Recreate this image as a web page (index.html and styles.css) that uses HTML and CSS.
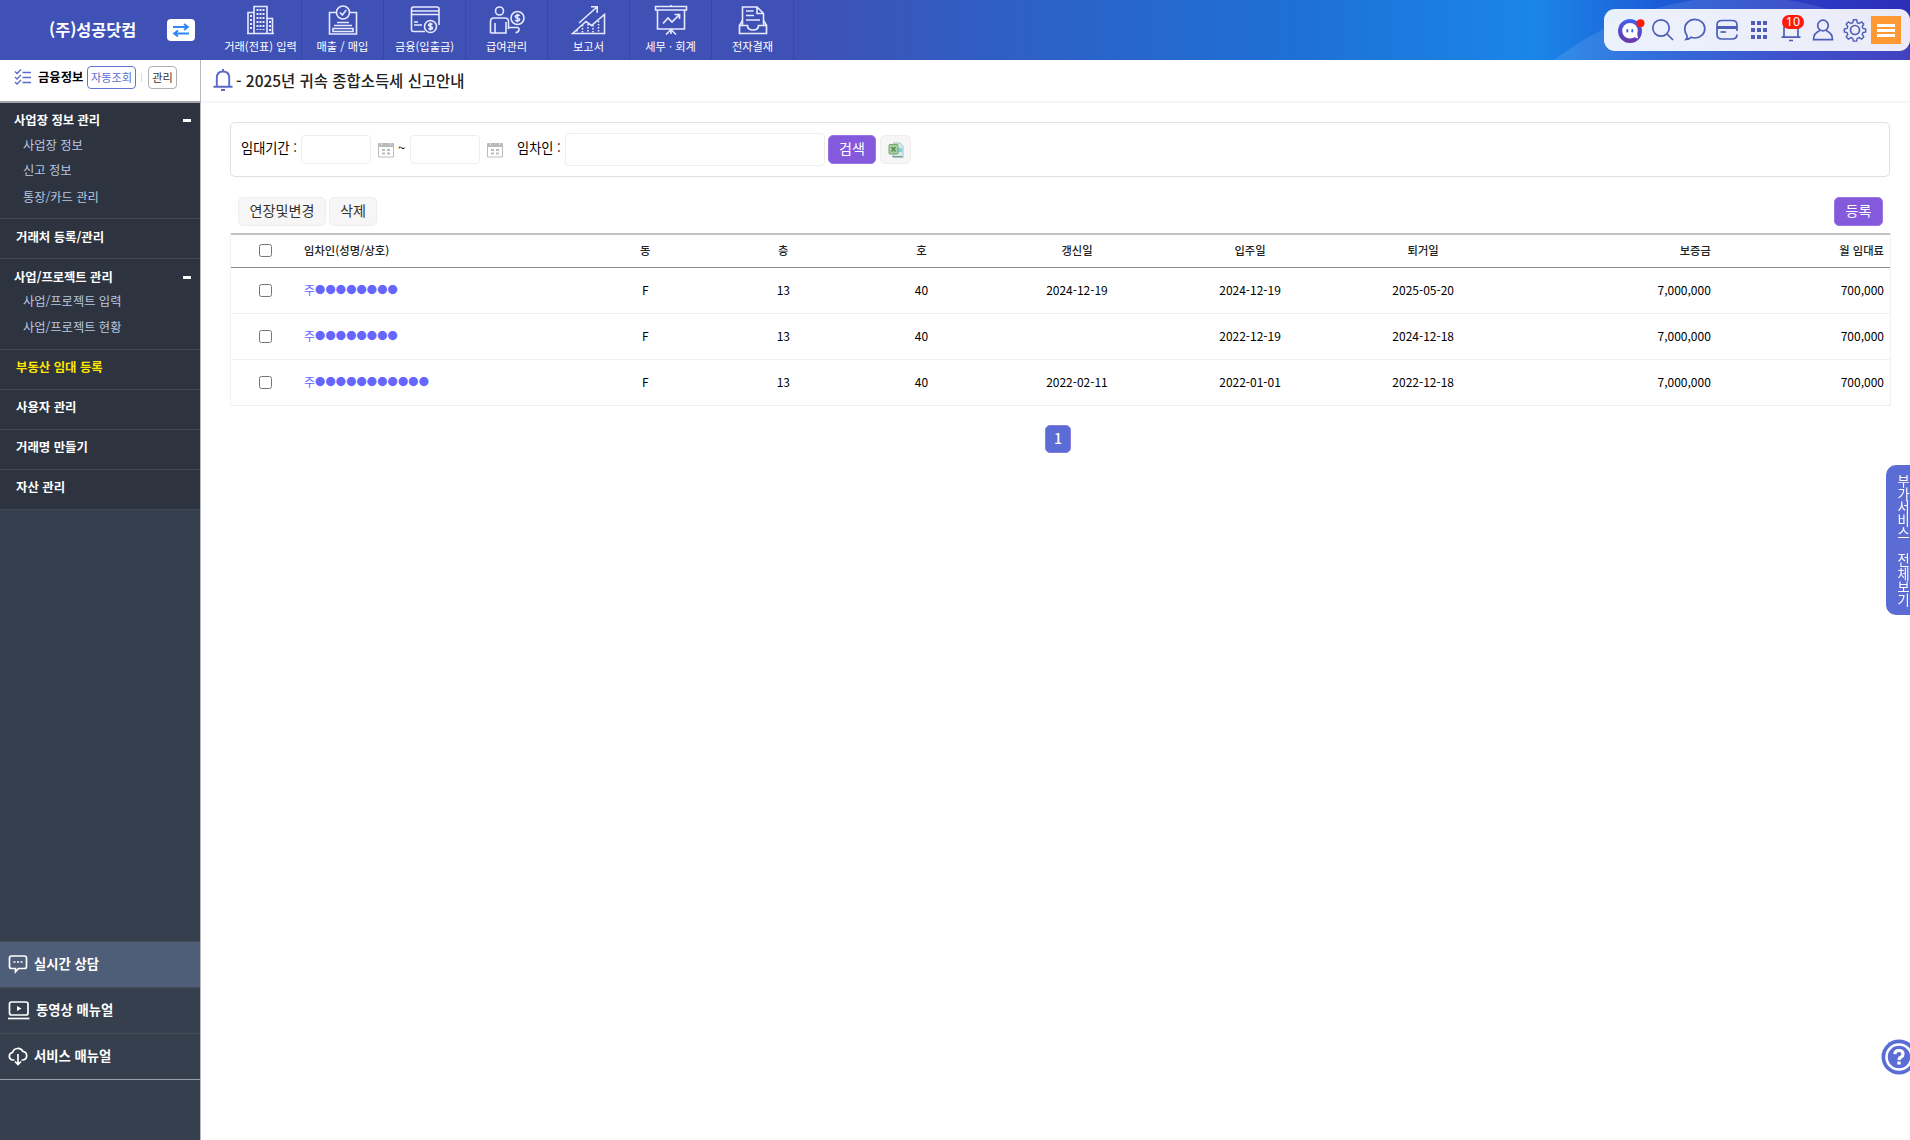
FILE: index.html
```html
<!DOCTYPE html>
<html lang="ko">
<head>
  <meta charset="utf-8">
  <title>부동산 임대 등록</title>
  <link rel="stylesheet" href="styles.css">
</head>
<body>

  <!-- 상단 헤더 -->
  <header class="header">
    <div class="company">
      <span class="company-name">(주)성공닷컴</span>
      <button class="btn-swap">
        <svg width="18" height="14" viewBox="0 0 18 14" fill="none" stroke="#2f86f6" stroke-width="1.8"><path d="M1 4h15M12 1l4 3-4 3M17 10.5H2M6 7.5l-4 3 4 3"/></svg>
      </button>
    </div>
    <nav class="gnb">
      <a class="gnb-item">
        <svg width="30" height="30" viewBox="0 0 30 30"><path d="M2 28.500V7.500H8M8 28.500V1.500H21V28.500M21 13.500H26.500V28.500M1 28.500H28"/><path d="M11.500 4V25M14.500 4V25M17.500 4V25M5 10V26M24 16V26" stroke-dasharray="2 2" stroke-width="2"/></svg>
        <span>거래(전표) 입력</span>
      </a>
      <a class="gnb-item">
        <svg width="30" height="30" viewBox="0 0 30 30"><path d="M8 7.500H1.500V29H28.500V7.500H22"/><circle cx="15" cy="7.500" r="6.500"/><path d="M12 7.500l2.300 2.500 4-5M9 17.500H21M6 20.500H24M5 23.500H25V26.500H5Z"/></svg>
        <span>매출 / 매입</span>
      </a>
      <a class="gnb-item">
        <svg width="30" height="30" viewBox="0 0 30 30"><path d="M15 26.500H3.500Q1.500 26.500 1.500 24.500V4Q1.500 2 3.500 2H27Q29 2 29 4V20M1.500 6H29M1.500 9.500H29M4 17H8M4 20H12"/><circle cx="20.500" cy="21.500" r="6"/><path d="M22.500 19.500c-1-1.200-4-1-4 .6 0 1.800 4 .9 4 2.800 0 1.600-3 1.800-4 .4M20.500 17.500v8"/></svg>
        <span>금융(입출금)</span>
      </a>
      <a class="gnb-item">
        <svg width="36" height="30" viewBox="0 0 36 30"><circle cx="10.500" cy="6" r="4"/><path d="M1.500 28V16.500Q1.500 13 5 13H16Q19.500 13 19.500 16.500V22.500H28Q30.500 22.500 30 25 29.500 27.500 26.500 27.500M1.500 28H17V17M6 28V18M19.500 17V24"/><circle cx="28.500" cy="13" r="6.500"/><path d="M30.700 10.800c-1-1.300-4.400-1-4.400.7 0 2 4.400 1 4.400 3 0 1.700-3.400 2-4.500.5M28.500 8.700v8.600"/></svg>
        <span>급여관리</span>
      </a>
      <a class="gnb-item">
        <svg width="36" height="30" viewBox="0 0 36 30"><path d="M1.500 28.500L15 16.500 20.500 20.500 33.500 9.500V28.500ZM8 18L26 2M20 1.800H26.200V8"/><path d="M11.500 20V28M17 19V28M22 20V28M27.500 16V28M6 25V28" stroke-dasharray="1.500 1.500"/></svg>
        <span>보고서</span>
      </a>
      <a class="gnb-item">
        <svg width="34" height="30" viewBox="0 0 34 30"><path d="M1.500 1.500H32.500V5H1.500ZM3.500 5V24H30.500V5M17 24V29M17 24.500L12 29.500M17 24.500L22 29.500M17 0V1.500"/><path d="M9 18.500L14 13 18 17 25 10M20.500 9.500H25.500V14" stroke-width="1.700"/></svg>
        <span>세무 · 회계</span>
      </a>
      <a class="gnb-item">
        <svg width="30" height="30" viewBox="0 0 30 30"><path d="M4.500 20V2H19L25.500 8.500V20M19 2V8.500H25M8 6H15.500M8 10.500H16M8 15H22"/><path d="M1.500 20.500L4.500 15.500M28.500 20.500L25.500 15.500M1.500 28.500V20.500H9.500Q9.500 25 15 25 20.500 25 20.500 20.500H28.500V28.500Z" stroke-width="1.700"/></svg>
        <span>전자결재</span>
      </a>
    </nav>

    <!-- 우측 아이콘 모음 -->
    <div class="tools">
      <span class="tool tool-bot">
        <svg width="28" height="28" viewBox="0 0 28 28"><defs><linearGradient id="bot" x1="0" y1="0" x2="0" y2="1"><stop offset="0" stop-color="#3f63ee"/><stop offset="1" stop-color="#6a37a8"/></linearGradient></defs><circle cx="13" cy="15" r="12" fill="url(#bot)"/><path d="M14 20l7 2.500-1-6z" fill="#fff"/><circle cx="13" cy="14.700" r="7.800" fill="#fff"/><rect x="9.300" y="13" width="2" height="3.600" rx="1" fill="#3f63ee"/><rect x="14.300" y="13" width="2" height="3.600" rx="1" fill="#3f63ee"/><circle cx="23.500" cy="7.300" r="4" fill="#ff1a0a"/></svg>
      </span>
      <span class="tool"><svg width="24" height="24" viewBox="0 0 24 24"><circle cx="10" cy="10" r="8.200"/><path d="M16 16l6 6"/></svg></span>
      <span class="tool"><svg width="24" height="24" viewBox="0 0 24 24"><path d="M3 21.500Q4.500 19.500 4 17.500C2.500 16 1.800 13.500 1.800 11A10 9.300 0 1 1 12 20Q9.500 20 8 19.300 6 21.200 3 21.500Z"/></svg></span>
      <span class="tool"><svg width="24" height="24" viewBox="0 0 24 24"><path d="M22 13V7Q22 2.500 17 2.500H7Q2 2.500 2 7V16.500Q2 21 7 21H17Q22 21 22 16.500"/><path d="M2 9.500H22" stroke-width="3"/><path d="M5.500 14H11"/></svg></span>
      <span class="tool"><svg class="fill" width="24" height="24" viewBox="0 0 24 24"><path d="M4 3h4v4H4zM10 3h4v4h-4zM16 3h4v4h-4zM4 10h4v4H4zM10 10h4v4h-4zM16 10h4v4h-4zM4 17h4v4H4zM10 17h4v4h-4zM16 17h4v4h-4z"/></svg></span>
      <span class="tool tool-bell">
        <svg width="24" height="24" viewBox="0 0 24 24"><path d="M5 19V10Q5 4 12 4T19 10V19M2.500 19.200H21.500M10 22.500H14"/></svg>
        <em class="badge">10</em>
      </span>
      <span class="tool"><svg width="24" height="24" viewBox="0 0 24 24"><circle cx="12" cy="7.500" r="5.300"/><path d="M9 12.500Q2.500 15 2.500 21.700H21.500Q21.500 15 15 12.500"/></svg></span>
      <span class="tool tool-gear"><svg width="24" height="24" viewBox="0 0 24 24"><circle cx="12" cy="12" r="4.500"/><path d="M10.400 1.800h3.200l.6 2.900 1.900.8 2.500-1.600 2.200 2.200-1.600 2.500.8 1.900 2.700.5v3l-2.700.6-.8 1.900 1.600 2.500-2.200 2.200-2.500-1.600-1.900.8-.6 2.700h-3.200l-.6-2.700-1.900-.8-2.500 1.600-2.200-2.200 1.600-2.500-.8-1.900-2.700-.6v-3l2.700-.5.8-1.900-1.600-2.500 2.200-2.200 2.500 1.600 1.900-.8z" stroke-width="1.400"/></svg></span>
      <span class="menu"><i></i><i></i><i></i></span>
    </div>
  </header>

  <div class="wrap">
    <!-- 좌측 메뉴 -->
    <aside class="side">
      <div class="side-top">
        <svg width="18" height="16" viewBox="0 0 18 16" fill="none" stroke="#5b6cc8" stroke-width="1.300"><path d="M1 2.500l2 2 4-4M1 8l2 2 4-4M1 13l2 2 4-4M8.500 3.500H17M8.500 8.500H17M8.500 13.500H17"/></svg>
        <strong>금융정보</strong>
        <button class="btn-auto">자동조회</button>
        <span class="bar"></span>
        <button class="btn-manage">관리</button>
      </div>
      <ul class="menu-list">
        <li class="group first">
          <div class="group-title">사업장 정보 관리<i></i></div>
          <a>사업장 정보</a>
          <a>신고 정보</a>
          <a>통장/카드 관리</a>
        </li>
        <li class="single">거래처 등록/관리</li>
        <li class="group second">
          <div class="group-title">사업/프로젝트 관리<i></i></div>
          <a>사업/프로젝트 입력</a>
          <a>사업/프로젝트 현황</a>
        </li>
        <li class="single on">부동산 임대 등록</li>
        <li class="single">사용자 관리</li>
        <li class="single">거래명 만들기</li>
        <li class="single">자산 관리</li>
      </ul>
      <div class="support">
        <a class="talk">
          <svg width="20" height="20" viewBox="0 0 20 20"><path d="M3.500 2H16.500Q18.500 2 18.500 4V12.500Q18.500 14.500 16.500 14.500H10.500L7.500 17.800V14.500H3.500Q1.500 14.500 1.500 12.500V4Q1.500 2 3.500 2Z"/><path d="M5.500 8h2M9 8h2M12.500 8h2"/></svg>
          <span>실시간 상담</span>
        </a>
        <a class="video">
          <svg width="22" height="20" viewBox="0 0 22 20"><rect x="1.500" y="2" width="18.500" height="13" rx="2"/><path d="M9 6l4.500 2.500L9 11z" fill="#fff" stroke="none"/><path d="M0 18.500H21.500"/></svg>
          <span>동영상 매뉴얼</span>
        </a>
        <a class="manual">
          <svg width="20" height="20" viewBox="0 0 20 20"><path d="M6.500 14H4.500A3.800 3.800 0 0 1 4.500 6.500 5.700 5.700 0 0 1 15 5.500 4.300 4.300 0 0 1 15 14H13.500M10 8V18M7 15.500l3 3 3-3"/></svg>
          <span>서비스 매뉴얼</span>
        </a>
      </div>
    </aside>

    <!-- 본문 -->
    <main class="content">
      <div class="notice">
        <svg width="20" height="24" viewBox="0 0 20 24" fill="none" stroke="#5a69c4" stroke-width="1.900"><path d="M3.800 18.500V10Q3.800 3.500 10 3.500T16.200 10V18.500M.5 18.800H19.500M10 1V3.500M8 22H12"/></svg>
        <span>- 2025년 귀속 종합소득세 신고안내</span>
      </div>

      <div class="search">
        <label class="lb-term">임대기간 :</label>
        <input type="text" class="in-date">
        <svg class="cal" width="16" height="16" viewBox="0 0 16 16"><path d="M.5 1.500H15.500V15H.5Z" fill="#fff" stroke="#bbb"/><path d="M1 1H15V5H1Z" fill="#bbb"/><path d="M3.500 0V3M12.500 0V3" stroke="#eee"/><path d="M4 8h3M9 8h3M4 11.500h3M9 11.500h3" stroke="#bbb" stroke-width="2"/></svg>
        <span class="tilde">~</span>
        <input type="text" class="in-date">
        <svg class="cal" width="16" height="16" viewBox="0 0 16 16"><path d="M.5 1.500H15.500V15H.5Z" fill="#fff" stroke="#bbb"/><path d="M1 1H15V5H1Z" fill="#bbb"/><path d="M3.500 0V3M12.500 0V3" stroke="#eee"/><path d="M4 8h3M9 8h3M4 11.500h3M9 11.500h3" stroke="#bbb" stroke-width="2"/></svg>
        <label class="lb-name">임차인 :</label>
        <input type="text" class="in-name">
        <button class="btn purple btn-search">검색</button>
        <button class="btn gray btn-excel">
          <svg width="16" height="16" viewBox="0 0 16 16"><path d="M5.500 1H12L15 4V15.500H5.500Z" fill="#dbe9ee" stroke="#a9c3c8"/><path d="M10 6h4v4h-4z" fill="#7fd0ee"/><path d="M4 14.500H14.500" stroke="#7f9f8f"/><rect x="1" y="2.500" width="9" height="9.500" rx="1" fill="#a9cfa2" stroke="#6fa86c"/><path d="M3.500 5l4 4.500M7.500 5l-4 4.500" stroke="#4c8a4a" stroke-width="1.300"/></svg>
        </button>
      </div>

      <div class="actions">
        <button class="btn gray btn-extend">연장및변경</button>
        <button class="btn gray btn-delete">삭제</button>
        <button class="btn purple btn-add">등록</button>
      </div>

      <table class="list">
        <colgroup>
          <col class="c-check"><col class="c-name"><col class="c-unit"><col class="c-unit"><col class="c-unit"><col class="c-date"><col class="c-date"><col class="c-date"><col class="c-deposit"><col class="c-rent">
        </colgroup>
        <thead>
          <tr>
            <th><input type="checkbox"></th>
            <th class="left">임차인(성명/상호)</th>
            <th>동</th>
            <th>층</th>
            <th>호</th>
            <th>갱신일</th>
            <th>입주일</th>
            <th>퇴거일</th>
            <th class="right">보증금</th>
            <th class="right">월 임대료</th>
          </tr>
        </thead>
        <tbody>
          <tr>
            <td><input type="checkbox"></td>
            <td class="left"><a>주<b>●●●●●●●●</b></a></td>
            <td>F</td><td>13</td><td>40</td>
            <td>2024-12-19</td><td>2024-12-19</td><td>2025-05-20</td>
            <td class="right">7,000,000</td><td class="right">700,000</td>
          </tr>
          <tr>
            <td><input type="checkbox"></td>
            <td class="left"><a>주<b>●●●●●●●●</b></a></td>
            <td>F</td><td>13</td><td>40</td>
            <td></td><td>2022-12-19</td><td>2024-12-18</td>
            <td class="right">7,000,000</td><td class="right">700,000</td>
          </tr>
          <tr>
            <td><input type="checkbox"></td>
            <td class="left"><a>주<b>●●●●●●●●●●●</b></a></td>
            <td>F</td><td>13</td><td>40</td>
            <td>2022-02-11</td><td>2022-01-01</td><td>2022-12-18</td>
            <td class="right">7,000,000</td><td class="right">700,000</td>
          </tr>
        </tbody>
      </table>

      <div class="paging"><a>1</a></div>
    </main>
  </div>

  <!-- 화면 우측 고정 버튼 -->
  <div class="quick">부가서비스 전체보기</div>
  <div class="help">
    <svg width="36" height="36" viewBox="0 0 36 36"><circle cx="18" cy="18" r="17.500" fill="#5b6cd4"/><circle cx="18" cy="18" r="12.500" fill="none" stroke="#fff" stroke-width="2.600"/><path d="M13.800 15.200Q14 11.500 18 11.500T22 14.900Q22 17 20 18T18 21" fill="none" stroke="#fff" stroke-width="3.200"/><rect x="16.300" y="22.500" width="3.400" height="3" fill="#fff"/></svg>
  </div>

</body>
</html>
```
FILE: styles.css
```css
* {
  box-sizing: border-box;
}

body {
  margin: 0;
  height: 1140px;
  overflow: hidden;
  background: #fff;
  color: #000;
  font-family: "Noto Sans CJK KR", "Noto Sans", sans-serif;
  font-size: 12px;
  line-height: 18px;
}

button,
input {
  font-family: inherit;
  margin: 0;
}

ul {
  margin: 0;
  padding: 0;
  list-style: none;
}

/* header */
.header {
  display: flex;
  height: 60px;
  background:
    radial-gradient(circle at 1741px 303px, rgba(255, 255, 255, 0.1) 306px, transparent 307px),
    linear-gradient(90deg, #3f51b5 0, #3f51b5 800px, #2f5fc4 1000px, #1e70d6 1300px, #1b86e8 1535px, #1c5cd6 1660px, #2a3cc4 1800px, #2d2db8 1910px);
}

.company {
  display: flex;
  align-items: center;
  width: 220px;
  padding-left: 49px;
}

.company-name {
  width: 118px;
  padding-bottom: 2px;
  color: #fff;
  font-size: 16.3px;
  font-weight: 700;
  white-space: nowrap;
}

.btn-swap {
  display: flex;
  align-items: center;
  justify-content: center;
  width: 28px;
  height: 22px;
  padding: 0;
  border: 0;
  border-radius: 4px;
  background: #fff;
}

.gnb {
  display: flex;
}

.gnb-item {
  display: flex;
  flex-direction: column;
  align-items: center;
  width: 82px;
  padding-top: 5px;
  border-right: 1px solid #3848a6;
  color: #fff;
  font-size: 11.2px;
  line-height: 16px;
  white-space: nowrap;
}

.gnb-item svg {
  margin-bottom: 3px;
  fill: none;
  stroke: #e6e9ff;
  stroke-width: 1.6;
}

.tools {
  display: flex;
  align-items: center;
  width: 306px;
  height: 42px;
  margin: 9px 0 0 auto;
  padding-left: 13px;
  border-radius: 11px;
  background: rgba(255, 255, 255, 0.9);
}

.tool {
  position: relative;
  display: flex;
  width: 32px;
  height: 24px;
}

.tool-bot {
  width: 34px;
  height: 28px;
}

.tool-gear {
  width: 28px;
}

.tool svg {
  fill: none;
  stroke: #4d5db8;
  stroke-width: 1.7;
}

.tool-bot svg {
  stroke: none;
}

.tool svg.fill {
  fill: #4d5db8;
  stroke: none;
}

.badge {
  position: absolute;
  top: -3px;
  left: 3px;
  width: 22px;
  height: 14px;
  border-radius: 7px;
  background: #ff1a0a;
  color: #fff;
  font: normal 12.5px/14px "Noto Sans", sans-serif;
  text-align: center;
}

.menu {
  display: flex;
  flex-direction: column;
  align-items: center;
  justify-content: center;
  gap: 2px;
  width: 30px;
  height: 28px;
  background: #ff9933;
}

.menu i {
  width: 18px;
  height: 3px;
  background: #fff;
}

.wrap {
  display: flex;
  height: 1080px;
}

/* sidebar */
.side {
  display: flex;
  flex-direction: column;
  width: 201px;
  border-right: 1px solid #b5b8bd;
  background: #363f4d;
}

.side-top {
  display: flex;
  align-items: center;
  height: 43px;
  padding: 0 0 7px 14px;
  border-bottom: 2px solid #a5a7aa;
  background: #fff;
  white-space: nowrap;
}

.side-top strong {
  width: 49px;
  padding-left: 6px;
  margin-right: 6px;
  font-size: 12.3px;
  font-weight: 700;
}

.side-top button {
  height: 23px;
  padding: 0;
  border-radius: 4px;
  background: #fff;
  font-size: 11.2px;
}

.btn-auto {
  width: 49px;
  border: 1px solid #6675cf;
  color: #5b6cd4;
}

.bar {
  width: 1px;
  height: 9px;
  margin: 0 6px 0 5px;
  background: #ddd;
}

.btn-manage {
  width: 29px;
  border: 1px solid #b0b0b0;
  color: #333;
}

.menu-list {
  background: #2d343f;
  color: #fff;
}

.menu-list li {
  border-bottom: 1px solid #414854;
}

.group {
  font-size: 12.25px;
}

.group.first {
  height: 116px;
  padding-top: 8px;
}

.group.second {
  height: 91px;
  padding-top: 9px;
}

.group-title {
  display: flex;
  align-items: center;
  justify-content: space-between;
  padding: 0 9px 0 14px;
  font-size: 12.3px;
  font-weight: 700;
}

.group-title i {
  width: 8px;
  height: 3px;
  background: #fff;
}

.group a {
  display: block;
  padding-left: 23px;
  margin-top: 7px;
  color: #b9c7e0;
}

.first a:last-child {
  margin-top: 9px;
}

.second a {
  margin-top: 6px;
}

.second a:last-child {
  margin-top: 8px;
}

.single {
  height: 40px;
  padding: 9px 0 0 16px;
  font-size: 12.4px;
  font-weight: 700;
}

.on,
.on ~ .single {
  padding-top: 8px;
}

.single.on {
  color: #ffe600;
}

.support {
  margin-top: auto;
  margin-bottom: 60px;
  border-bottom: 1px solid #9a9fa7;
}

.support a {
  display: flex;
  align-items: center;
  gap: 6px;
  height: 46px;
  padding: 0 0 2px 8px;
  border-top: 1px solid #454b57;
  color: #fff;
  font-size: 13.3px;
  font-weight: 700;
}

.support .talk {
  background: #4e5d78;
}

.support svg {
  fill: none;
  stroke: #fff;
  stroke-width: 1.7;
}

/* content */
.content {
  flex: 1;
}

.notice {
  display: flex;
  align-items: center;
  gap: 3px;
  height: 43px;
  padding: 0 0 1px 12px;
  border-bottom: 2px solid #f6f6f6;
  color: #222;
  font-size: 15.45px;
  font-weight: 500;
}

.search {
  display: flex;
  align-items: center;
  height: 55px;
  margin: 19px 20px 0 29px;
  padding-left: 10px;
  border: 1px solid #e0e0e0;
  border-radius: 5px;
  font-size: 13.2px;
  white-space: nowrap;
}

.search input {
  border: 1px solid #eee;
  border-radius: 4px;
}

.search label,
.tilde {
  padding-bottom: 4px;
}

.lb-term {
  width: 60px;
}

.in-date {
  width: 70px;
  height: 29px;
}

.cal {
  margin-left: 7px;
}

.tilde {
  width: 16px;
  padding-left: 4px;
}

.lb-name {
  width: 62px;
  padding-left: 14px;
}

.in-name {
  width: 260px;
  height: 33px;
}

.btn {
  height: 29px;
  padding: 0 0 4px;
  border: 1px solid #eee;
  border-radius: 5px;
  font-size: 14.1px;
  line-height: 20px;
}

.btn.purple {
  border-color: #9a75e4;
  background: #8459dc;
  color: #fff;
}

.btn.gray {
  background: #f6f6f6;
  color: #333;
}

.btn-search {
  width: 48px;
  margin-left: 3px !important;
}

.btn-excel {
  display: flex;
  align-items: center;
  justify-content: center;
  width: 31px;
  padding: 0 !important;
  margin-left: 4px !important;
}

.actions {
  display: flex;
  gap: 3px;
  padding: 20px 27px 0 37px;
  height: 56px;
}

.btn-extend {
  width: 88px;
}

.btn-delete {
  width: 48px;
}

.btn-add {
  width: 49px;
  margin-left: auto !important;
}

/* table */
.list {
  width: 1661px;
  margin-left: 29px;
  border-collapse: separate;
  border-spacing: 0;
  border: 1px solid #f1f1f1;
  border-width: 0 1px;
  table-layout: fixed;
}

.c-check { width: 68px; }
.c-name { width: 277px; }
.c-unit { width: 138px; }
.c-date { width: 173px; }
.c-deposit { width: 207px; }
.c-rent { width: 173px; }

.list th {
  height: 35px;
  padding: 0 5px 3px;
  border-top: 2px solid #c2c2c2;
  border-bottom: 1px solid #8c8c8c;
  color: #222;
  font-size: 11.3px;
  font-weight: 500;
}

.list td {
  height: 46px;
  padding: 0 5px 2px;
  border-bottom: 1px solid #f0f0f0;
  text-align: center;
}

.list .left {
  text-align: left;
}

.list .right {
  padding-right: 6px;
  text-align: right;
}

.list input {
  display: block;
  width: 13px;
  height: 13px;
  margin: 2px auto 0;
}

.list a {
  display: flex;
  color: #6666ff;
}

.list a b {
  font-size: 10.2px;
  font-weight: 400;
  letter-spacing: 0.17px;
}

.paging {
  display: flex;
  justify-content: center;
  padding: 19px 0 0 5px;
}

.paging a {
  width: 26px;
  height: 28px;
  border: 1px solid #8a7be0;
  border-radius: 5px;
  background: #5b6cd4;
  color: #fff;
  font-size: 14px;
  font-weight: 500;
  line-height: 25px;
  text-align: center;
}

/* floating */
.quick {
  position: fixed;
  top: 465px;
  right: 0;
  width: 24px;
  height: 150px;
  padding: 9px 0 0;
  border-radius: 10px 0 0 10px;
  background: #5b6cd4;
  color: #fff;
  font-size: 13.2px;
  line-height: 14px;
  white-space: nowrap;
  word-spacing: 10px;
  writing-mode: vertical-rl;
}

.help {
  position: fixed;
  top: 1039px;
  right: -7px;
  width: 36px;
  height: 36px;
}
```
